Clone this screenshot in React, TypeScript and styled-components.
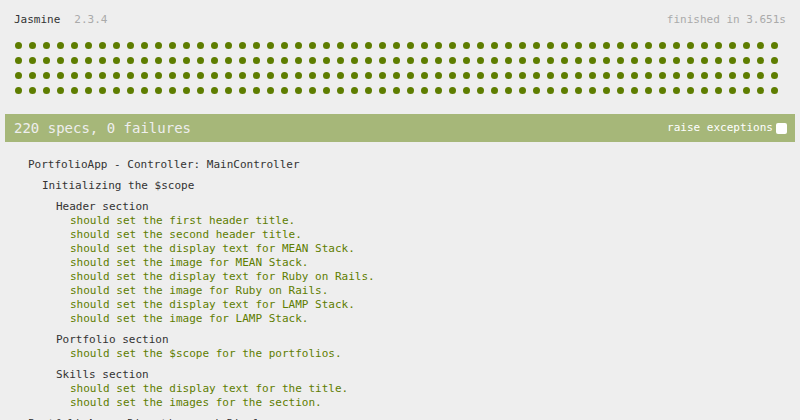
import React from "react";
import styled, { createGlobalStyle } from "styled-components";

const GlobalStyle = createGlobalStyle`
  html, body { margin: 0; padding: 0; background: #eeeeee; }
  body { overflow: hidden; }
`;

const Reporter = styled.div`
  background: #eeeeee;
  padding: 5px;
  font-family: "DejaVu Sans Mono", "Liberation Mono", monospace;
  font-size: 11px;
  line-height: 14px;
  color: #333333;
`;

const Banner = styled.div`
  display: flex;
  align-items: center;
  height: 28px;
  padding: 1px 9px 0;
  box-sizing: border-box;
`;

const Title = styled.span`
  color: #333333;
`;

const Version = styled.span`
  color: #aaaaaa;
  margin-left: 14px;
`;

const Duration = styled.span`
  color: #aaaaaa;
  margin-left: auto;
`;

const SymbolSummary = styled.ul`
  list-style: none;
  margin: 5px 0 16px;
  padding: 0 9px;
  display: flex;
  flex-wrap: wrap;
`;

const Symbol = styled.li`
  width: 14px;
  height: 15px;
  display: flex;
  align-items: center;
  padding-left: 0.5px;
  box-sizing: border-box;
  &::before {
    content: "";
    display: block;
    width: 7.5px;
    height: 7.5px;
    border-radius: 50%;
    background: #5e7d00;
  }
`;

const Bar = styled.div`
  display: flex;
  align-items: center;
  height: 28px;
  padding: 0 8px 0 9px;
  background: #a6b779;
  color: #eeeeee;
  font-size: 14px;
`;

const Exceptions = styled.label`
  margin-left: auto;
  display: flex;
  align-items: center;
  font-size: 11px;
  color: #ffffff;
`;

const CheckBox = styled.span`
  display: inline-block;
  width: 11px;
  height: 11px;
  margin-left: 3px;
  border-radius: 2px;
  background: #ffffff;
  margin-top: 1px;
`;

const Summary = styled.div`
  margin-top: 16px;
  padding: 0 9px;
`;

const SuiteList = styled.ul`
  list-style: none;
  margin: 7px 0 7px 14px;
  padding: 0;
`;

const SuiteTitle = styled.li`
  color: #333333;
  white-space: nowrap;
`;

const SpecList = styled.ul`
  list-style: none;
  margin: 0 0 0 14px;
  padding: 0;
`;

const Spec = styled.li`
  color: #5e7d00;
  white-space: nowrap;
`;

type SuiteData = { name: string; specs?: string[]; children?: SuiteData[] };

const suites: SuiteData[] = [
  {
    name: "PortfolioApp - Controller: MainController",
    children: [
      {
        name: "Initializing the $scope",
        children: [
          {
            name: "Header section",
            specs: [
              "should set the first header title.",
              "should set the second header title.",
              "should set the display text for MEAN Stack.",
              "should set the image for MEAN Stack.",
              "should set the display text for Ruby on Rails.",
              "should set the image for Ruby on Rails.",
              "should set the display text for LAMP Stack.",
              "should set the image for LAMP Stack.",
            ],
          },
          {
            name: "Portfolio section",
            specs: ["should set the $scope for the portfolios."],
          },
          {
            name: "Skills section",
            specs: [
              "should set the display text for the title.",
              "should set the images for the section.",
            ],
          },
        ],
      },
    ],
  },
  {
    name: "PortfolioApp - Directive: mainDisplay",
    children: [
      {
        name: "Rendering the directive",
        specs: ["should render the main display."],
      },
    ],
  },
];

const Suite: React.FC<{ suite: SuiteData }> = ({ suite }) => (
  <SuiteList>
    <SuiteTitle>{suite.name}</SuiteTitle>
    {suite.children?.map((c) => (
      <Suite key={c.name} suite={c} />
    ))}
    {suite.specs && (
      <SpecList>
        {suite.specs.map((s) => (
          <Spec key={s}>{s}</Spec>
        ))}
      </SpecList>
    )}
  </SuiteList>
);

export default function App() {
  const dots = Array.from({ length: 220 }, (_, i) => i);
  return (
    <>
      <GlobalStyle />
      <Reporter>
        <Banner>
          <Title>Jasmine</Title>
          <Version>2.3.4</Version>
          <Duration>finished in 3.651s</Duration>
        </Banner>
        <SymbolSummary>
          {dots.map((i) => (
            <Symbol key={i} />
          ))}
        </SymbolSummary>
        <Bar>
          <span>220 specs, 0 failures</span>
          <Exceptions>
            raise exceptions
            <CheckBox />
          </Exceptions>
        </Bar>
        <Summary>
          {suites.map((s) => (
            <Suite key={s.name} suite={s} />
          ))}
        </Summary>
      </Reporter>
    </>
  );
}
